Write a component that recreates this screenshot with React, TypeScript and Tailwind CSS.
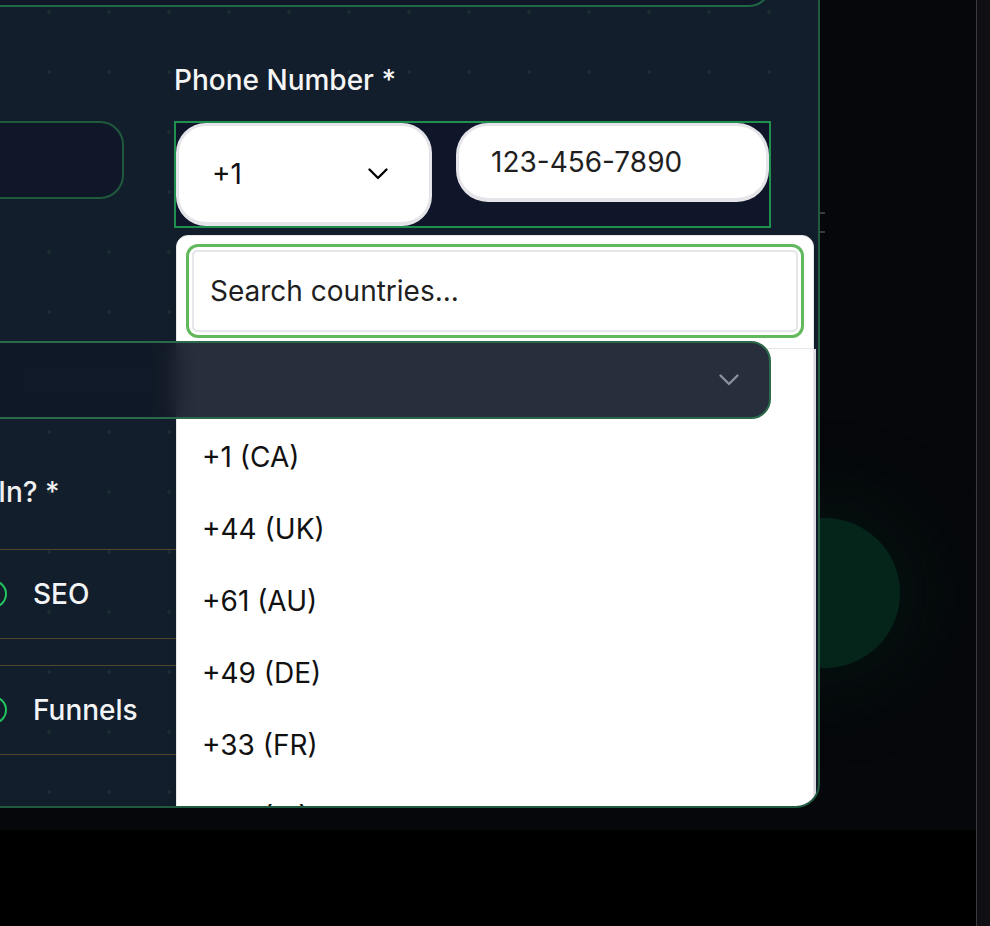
import React from 'react';

const countries = ['+1 (CA)', '+44 (UK)', '+61 (AU)', '+49 (DE)', '+33 (FR)', '+39 (IT)', '+81 (JP)'];
const services = ['Web Design', 'SEO', 'PPC Ads', 'Social Media', 'Funnels', 'Branding'];

function Chevron({ className }: { className?: string }) {
  return (
    <svg width="20" height="12" viewBox="0 0 20 12" fill="none" className={className}>
      <path d="M1.5 1.5 10 10l8.5-8.5" stroke="currentColor" strokeWidth="2.3" strokeLinecap="round" strokeLinejoin="round" />
    </svg>
  );
}

export default function App() {
  return (
    <div className="flex h-[926px] w-full overflow-hidden bg-black font-['Inter',sans-serif]">
      <div className="flex min-w-0 flex-1 flex-col">
        <section className="relative h-[830px] overflow-hidden bg-[#05070a]">
          {/* glow behind the card */}
          <div className="absolute left-[750px] top-[518px] h-[150px] w-[150px] rounded-full bg-[#05241a] shadow-[0_0_70px_25px_rgba(6,36,26,0.35)]" />
          <div className="absolute left-[820px] top-[212px] h-[2px] w-[5px] bg-[#3a3a3a]" />
          <div className="absolute left-[820px] top-[231px] h-[2px] w-[5px] bg-[#3a3a3a]" />

          {/* form card */}
          <div className="relative -mt-[120px] -ml-[522px] w-[1342px] overflow-hidden rounded-[24px] border-2 border-[#1f5a40] bg-[#121e2b] bg-[radial-gradient(circle,#1a2d31_1.6px,transparent_1.8px)] bg-[size:60px_60px] bg-[position:59px_40px] px-[47px] pt-[47px] pb-[51px] text-[28px] leading-[36px]">
            <div className="h-[78px] rounded-[22px] border-2 border-[#1e6a45] bg-[#0f1729]" />

            <div className="mt-[55px] grid grid-cols-2 gap-x-[50px]">
              <div>
                <div className="mb-[23px] font-medium text-[#f5f5f5]">Email Address *</div>
                <div className="h-[78px] rounded-[24px] border-2 border-[#1f5a3d] bg-[#0f1729]" />
              </div>
              <div>
                <div className="mb-[23px] font-medium text-[#f5f5f5]">Phone Number *</div>
                <div className="relative flex items-start gap-[24px] border-2 border-[#1f8f4e] bg-[#0f1629]">
                  <button className="flex h-[103px] w-[256px] items-center justify-between rounded-[30px] border-[3px] border-b-[4px] border-[#e4e4e9] bg-white pl-[33px] pr-[41px] text-[#111]">
                    <span>+1</span>
                    <Chevron className="text-black" />
                  </button>
                  <div className="flex h-[79px] flex-1 items-center rounded-[32px] border-[3px] border-b-[4px] border-[#e4e4e9] bg-white pl-[32px] text-[#1f1f1f]">
                    123-456-7890
                  </div>

                  {/* country dropdown */}
                  <div className="absolute left-[0px] top-[112px] z-10 h-[640px] w-[638px] rounded-t-xl border border-[#e5e7eb] bg-white shadow-lg">
                    <div className="border-b border-[#e5e7eb] px-[15px] pt-[14px] pb-[16px]">
                      <input
                        placeholder="Search countries..."
                        className="h-[82px] w-full rounded-md border-2 border-[#e5e7eb] pl-[16px] text-[28px] text-[#1f1f1f] outline-none ring-[3px] ring-[#62b85c] ring-offset-[3px] placeholder:text-[#1f1f1f]"
                      />
                    </div>
                    <ul className="-mr-[3px] border-r-2 border-[#dcdce0] pt-[72px]">
                      {countries.map((c) => (
                        <li key={c} className="flex h-[72px] items-center pl-[25px] text-[#111]">
                          {c}
                        </li>
                      ))}
                    </ul>
                  </div>
                </div>
              </div>
            </div>

            <div className="mt-[55px]">
              <div className="mb-[22px] font-medium text-[#f5f5f5]">Budget Range *</div>
              <div className="relative z-20 flex h-[78px] items-center justify-end rounded-[20px] border-2 border-[#2a6a4a] bg-[#111827]/90 pr-[30px] text-[#8c92a0] backdrop-blur-md">
                <Chevron />
              </div>
            </div>

            <div className="mt-[55px]">
              <div className="mb-[39px] font-medium text-[#f0f0f0]">Which Services Are You Interested In? *</div>
              <div className="grid grid-cols-3 gap-x-[16px] gap-y-[26px]">
                {services.map((s) => (
                  <label key={s} className="flex h-[90px] items-center gap-[26px] rounded-[18px] border border-[#4f482a] pl-[31px] text-[#f3f4f6]">
                    <span className="h-7 w-7 shrink-0 rounded-full border-2 border-[#22c55e]" />
                    <span className="font-medium">{s}</span>
                  </label>
                ))}
              </div>
            </div>
          </div>
        </section>
      </div>
      <div className="w-[14px] shrink-0 border-l border-[#393943] bg-[#0f0f14]" />
    </div>
  );
}
